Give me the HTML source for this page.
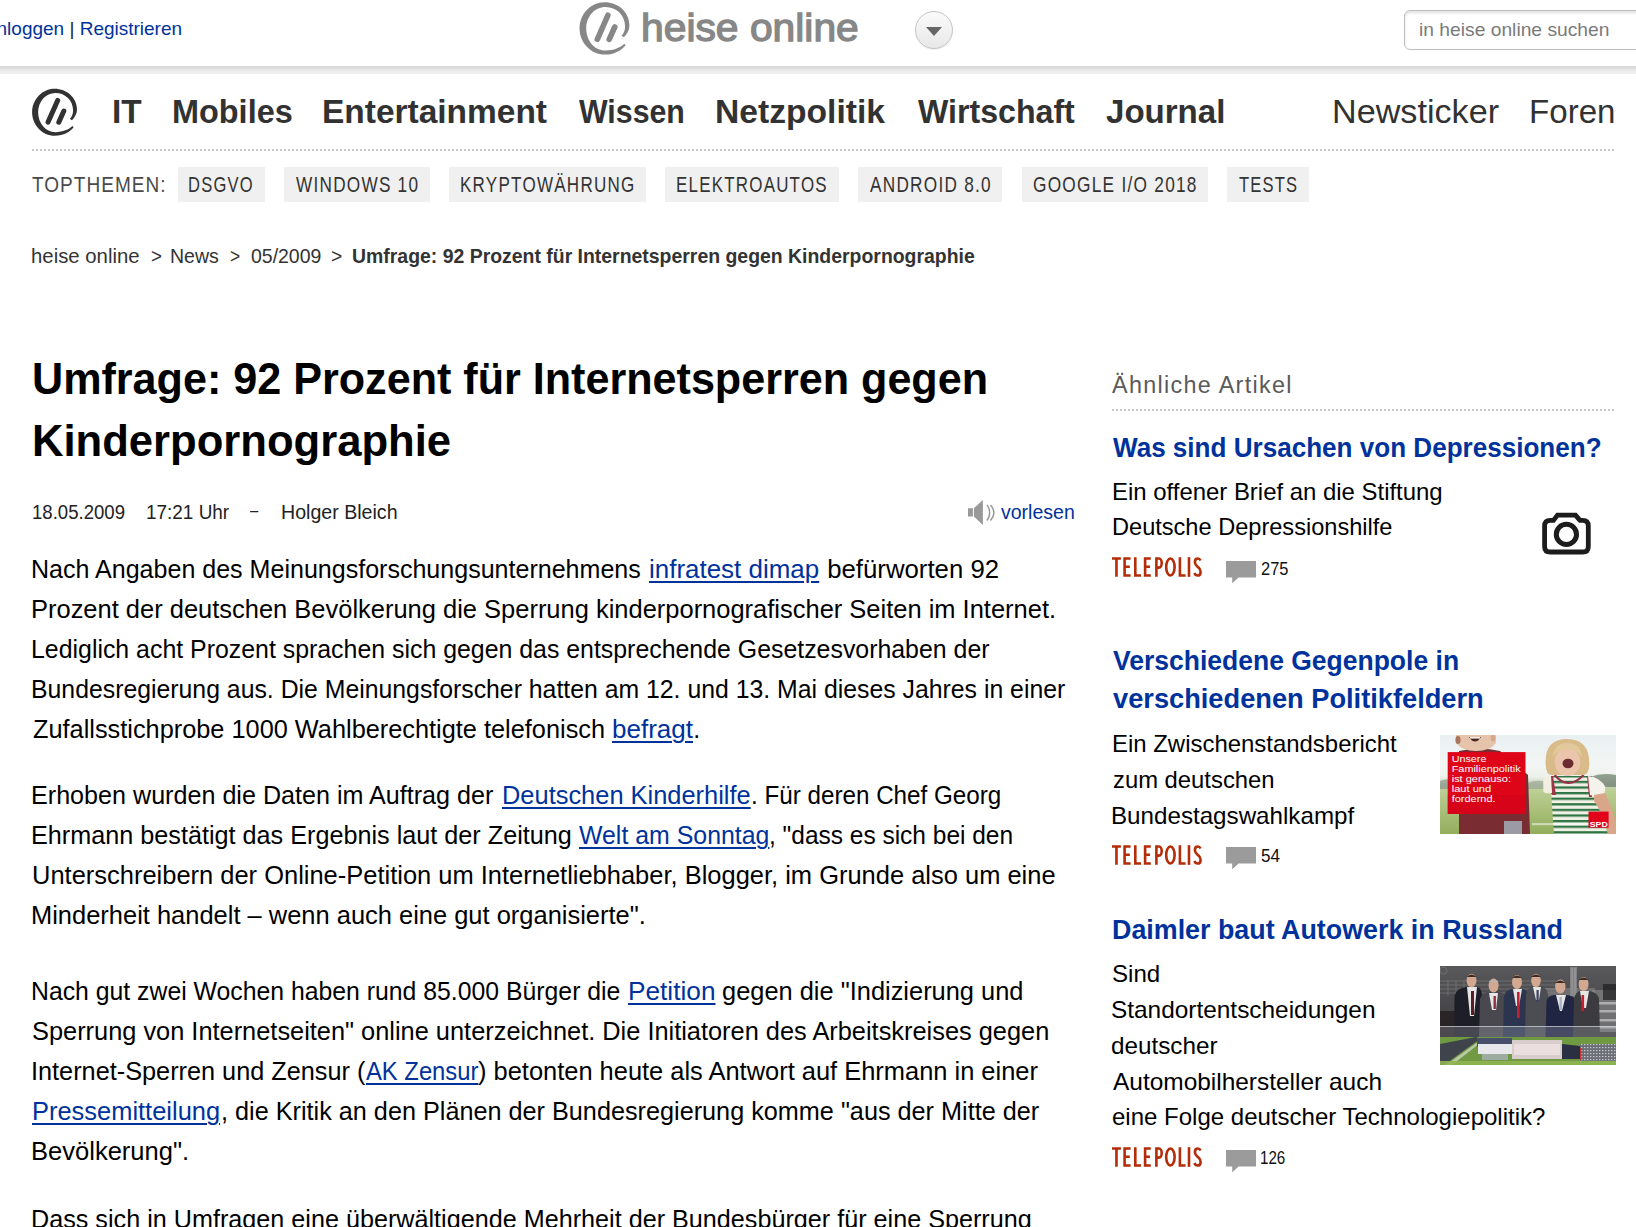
<!DOCTYPE html>
<html lang="de"><head><meta charset="utf-8"><title>Umfrage: 92 Prozent für Internetsperren gegen Kinderpornographie | heise online</title>
<style>
html,body{margin:0;padding:0;background:#fff;width:1636px;height:1227px;overflow:hidden;position:relative}
body{font-family:"Liberation Sans",sans-serif}
.t{position:absolute;white-space:pre;line-height:0;transform-origin:0 0}
.t a{color:#00329c;text-decoration:underline;text-decoration-thickness:2px;text-underline-offset:3px}
.abs{position:absolute}
.hbar{position:absolute;left:0;top:66px;width:1636px;height:8px;background:linear-gradient(#d8d8d8 0%,#dcdcdc 25%,#eeeeee 65%,#f0f0f0 100%)}
.search{position:absolute;left:1404px;top:10px;width:260px;height:38px;border:1.5px solid #bdbdbd;border-radius:6px;box-shadow:inset 0 2px 3px rgba(0,0,0,.12);background:#fff}
.dd{position:absolute;left:915px;top:11px;width:36px;height:36px;border-radius:50%;border:1.5px solid #c4c4c4;background:linear-gradient(#fbfbfb,#e8e8e8);box-shadow:0 1px 1px rgba(0,0,0,.08)}
.dd:after{content:"";position:absolute;left:9.8px;top:15.3px;border-left:8.5px solid transparent;border-right:8.5px solid transparent;border-top:9px solid #666}
.dots{position:absolute;height:2px;background-image:linear-gradient(90deg,#c8c8c8 50%,transparent 50%);background-size:4px 2px}
.tag{position:absolute;top:167px;height:35px;background:#f0f0f0}
</style></head><body>
<div class="hbar"></div>
<div class="search"></div>
<div class="dd"></div>
<svg class="abs" style="left:575.3px;top:-3.4px" width="62.2" height="62.2" viewBox="0 0 1227 1227"><path fill="#878787" d="M965 795C1030 720 1074 650 1074 560C1074 300 850 105 582 105C310 105 90 340 90 620C90 900 310 1135 590 1135C780 1135 920 1050 1000 950L972 922C900 1000 760 1055 600 1055C380 1055 222 860 222 620C222 380 390 195 600 195C820 195 988 360 988 580C988 660 960 720 918 765Z"/><g stroke="#878787" stroke-width="110" stroke-linecap="round"><line x1="650" y1="360" x2="440" y2="835"/><line x1="785" y1="592" x2="675" y2="838"/></g></svg>
<svg class="abs" style="left:28px;top:84px" width="56" height="56" viewBox="0 0 1227 1227"><path fill="#323232" d="M965 795C1030 720 1074 650 1074 560C1074 300 850 105 582 105C310 105 90 340 90 620C90 900 310 1135 590 1135C780 1135 920 1050 1000 950L972 922C900 1000 760 1055 600 1055C380 1055 222 860 222 620C222 380 390 195 600 195C820 195 988 360 988 580C988 660 960 720 918 765Z"/><g stroke="#323232" stroke-width="110" stroke-linecap="round"><line x1="650" y1="360" x2="440" y2="835"/><line x1="785" y1="592" x2="675" y2="838"/></g></svg>
<div class="dots" style="left:32px;top:149px;width:1584px"></div>
<div class="tag" style="left:178px;width:87px"></div>
<div class="tag" style="left:284px;width:146px"></div>
<div class="tag" style="left:449px;width:197px"></div>
<div class="tag" style="left:665px;width:174px"></div>
<div class="tag" style="left:858px;width:144px"></div>
<div class="tag" style="left:1022px;width:186px"></div>
<div class="tag" style="left:1227px;width:82px"></div>
<svg class="abs" style="left:968px;top:500px" width="30" height="26" viewBox="0 0 30 26"><path fill="#999" d="M0 8.3H4.9V16.6H0ZM5.9 8.3L14.9 0V25L5.9 16.6Z"/><path fill="none" stroke="#999" stroke-width="1.5" d="M19.1 4.9Q24.3 12.7 19.1 20.5M22.5 4.9Q29.3 12.7 22.5 20.5"/></svg>
<div class="dots" style="left:1112px;top:409px;width:504px"></div>
<svg class="abs" style="left:1540px;top:510px" width="53" height="47" viewBox="0 0 53 47"><path fill="none" stroke="#1c1c1c" stroke-width="4.8" stroke-linejoin="miter" d="M13.5 10.4L17.5 5.1H35.5L40 10.4H42.7Q48.3 10.4 48.3 16V36.4Q48.3 42 42.7 42H10.2Q4.6 42 4.6 36.4V16Q4.6 10.4 10.2 10.4Z"/><circle cx="26.4" cy="24.4" r="10.1" fill="none" stroke="#1c1c1c" stroke-width="5"/></svg>
<svg class="abs" style="left:1440px;top:735px" width="176" height="99" viewBox="0 0 176 99">
<defs><linearGradient id="g2" x1="0" y1="0" x2="0" y2="1">
<stop offset="0" stop-color="#e9f0f2"/><stop offset=".3" stop-color="#f2f5f3"/><stop offset=".42" stop-color="#eef2ec"/><stop offset=".5" stop-color="#c4ceb8"/><stop offset=".56" stop-color="#bccf94"/><stop offset="1" stop-color="#93ad5c"/></linearGradient>
<pattern id="stripes" width="10" height="5.6" patternUnits="userSpaceOnUse" y="1"><rect width="10" height="5.6" fill="#f1f0e4"/><rect width="10" height="2.3" fill="#2f7444"/></pattern>
</defs>
<rect width="176" height="99" fill="url(#g2)"/>
<path d="M0 46 Q10 42 22 46 L22 54 H0Z" fill="#7f8e80" opacity=".6"/>
<path d="M150 42 Q162 37 176 40 V52 H150Z" fill="#6f806f" opacity=".75"/>
<path d="M88 48 Q96 44 106 47 V54 H88Z" fill="#8a9888" opacity=".5"/>
<path d="M19 16 Q40 11 60 16 L88 40 L90 99 H19 Z" fill="#7a2c33"/>
<rect x="64" y="86" width="18" height="13" fill="#9c9aa4"/>
<path d="M16 0 H56 V8 Q50 16 36 16 Q22 16 16 8Z" fill="#e6c3ab"/>
<ellipse cx="18" cy="5" rx="2.6" ry="4" fill="#a8745c"/>
<ellipse cx="53" cy="3" rx="2.4" ry="3.6" fill="#d8a88c"/>
<path d="M29 2 Q35 11 41 2 Z" fill="#4a2424"/>
<rect x="30" y="2" width="10" height="1.6" fill="#f4eee8"/>
<rect x="7.7" y="17.1" width="77.8" height="61.9" fill="#df0519"/>
<rect x="7.7" y="60" width="77.8" height="19" fill="#c8041a" opacity=".35"/>
<g fill="#fff" font-family="Liberation Sans" font-size="8.8">
<text x="11.7" y="27.4" textLength="34.7" lengthAdjust="spacingAndGlyphs">Unsere</text><text x="11.7" y="37" textLength="68.9" lengthAdjust="spacingAndGlyphs">Familienpolitik</text><text x="11.7" y="46.8" textLength="59.3" lengthAdjust="spacingAndGlyphs">ist genauso:</text><text x="11.7" y="56.5" textLength="39.5" lengthAdjust="spacingAndGlyphs">laut und</text><text x="11.7" y="66.5" textLength="43.9" lengthAdjust="spacingAndGlyphs">fordernd.</text></g>
<path d="M110 41 L152 41 Q158 70 168 99 H114 Q112 70 110 41Z" fill="url(#stripes)"/>
<path d="M114.6 40 Q128 56 143.6 40" fill="none" stroke="#9a3048" stroke-width="2"/>
<path d="M110 41 L113 41 L116 60 L112 60Z" fill="#a03448"/><path d="M147 41 L151 41 L152 62 L149 62Z" fill="#a03448"/>
<path d="M103.3 44 Q106 41 111 41 L112 58 Q106 59 103.3 57Z" fill="#f2efe2"/>
<path d="M148 41 Q160 42 165.4 52 L164 62 Q156 62 150 60Z" fill="#f4f2ea"/>
<path d="M154 60 L165 58 Q172 72 176 86 V99 H168 Q164 80 154 66Z" fill="#d9a68a"/>
<path d="M105.7 30 Q104 4 127 4 Q150 4 149.3 30 Q149 40 142 40 L112 40 Q106 40 105.7 30Z" fill="#d9bb8a"/>
<ellipse cx="127.5" cy="27" rx="12.8" ry="14" fill="#ebc4ac"/>
<path d="M113 22 Q114 8 127 8 Q141 8 142 22 Q136 14 127 14 Q118 14 113 22Z" fill="#e2c99c"/>
<ellipse cx="128" cy="28.5" rx="5.5" ry="4.8" fill="#6a2c30"/>
<rect x="148.5" y="76.6" width="20.1" height="16.1" fill="#e2001a"/>
<text x="149.7" y="92.3" fill="#fff" font-family="Liberation Sans" font-weight="700" font-size="7.8" textLength="18.1" lengthAdjust="spacingAndGlyphs">SPD</text>
<rect x="92" y="88" width="55" height="2.2" fill="#fff" opacity=".5"/>
</svg>
<svg class="abs" style="left:1440px;top:966px" width="176" height="99" viewBox="0 0 176 99">
<defs><linearGradient id="g3" x1="0" y1="0" x2="0" y2="1"><stop offset="0" stop-color="#59585b"/><stop offset=".5" stop-color="#444346"/><stop offset="1" stop-color="#2c2b2e"/></linearGradient>
<pattern id="park" width="3" height="3" patternUnits="userSpaceOnUse"><rect width="3" height="3" fill="#6a6e74"/><rect width="1.4" height="1.2" fill="#c8ccd2"/></pattern></defs>
<rect width="176" height="99" fill="url(#g3)"/>
<g stroke="#7e7e80" stroke-width=".9" fill="none" opacity=".7"><path d="M0 15H120M0 19H120M0 23H120M0 27H120M8 14V30M16 14V30M24 14V30"/><circle cx="3.5" cy="4.5" r="3.5"/></g>
<rect x="0" y="45" width="16" height="30" fill="#231d1e" opacity=".8"/>
<rect x="130" y="1" width="7" height="30" fill="#8c8c8e" opacity=".8"/>
<rect x="131.5" y="2" width="1.2" height="28" fill="#b0b0b2" opacity=".6"/><rect x="134.5" y="2" width="1.2" height="28" fill="#b0b0b2" opacity=".6"/>
<rect x="105" y="22" width="50" height="10" fill="#8a8a8c" opacity=".55"/>
<rect x="152" y="24" width="24" height="42" fill="#8e8e90" opacity=".6"/>
<g fill="#c8c8ca" opacity=".7"><rect x="153" y="36" width="23" height="2.5"/><rect x="153" y="44" width="23" height="2.5"/><rect x="153" y="53" width="23" height="2.5"/><rect x="153" y="60" width="23" height="2.5"/></g>
<rect x="163" y="18" width="13" height="16" fill="#1e1e20" opacity=".7"/>
<path d="M14.5 30 Q16 22 27 21 H37 Q42 22 42 30 L44 71 H14 Z" fill="#1d1e27"/>
<path d="M40 33 Q42 27 48 26 H59 Q64 27 65 33 L66 71 H39 Z" fill="#48484e"/>
<path d="M64 30 Q66 24 72 23 H82 Q88 24 89 30 L90 71 H63 Z" fill="#2c3550"/>
<path d="M86 28 Q88 22 92 21 H101 Q107 22 108 28 L109 71 H85 Z" fill="#4b4d53"/>
<path d="M106.5 35 Q108 29 115 29 H126 Q134 29 136 35 L137 71 H105.5 Z" fill="#1f2542"/>
<path d="M134 32 Q136 26 140 25 H148 Q157 26 159 32 L160 71 H133 Z" fill="#3b3b40"/>
<g fill="#e8e6e4"><path d="M27 21 L37 21 L34 50 L30 50 Z"/><path d="M49 27 L58 27 L56 44 L52 44Z"/><path d="M73 23 L82 23 L79 40 L76 40Z"/><path d="M93 21 L101 21 L99 34 L96 34Z"/><path d="M116 29 L126 29 L122 45 L120 45Z"/><path d="M140 25 L149 25 L146 42 L143 42Z"/></g>
<g><rect x="31" y="25" width="3" height="24" fill="#5a1c26"/><rect x="53.5" y="30" width="2.4" height="13" fill="#8c3040"/><rect x="77" y="26" width="2.6" height="26" fill="#c42032"/><rect x="96.5" y="24" width="2.2" height="12" fill="#3e3e66"/><rect x="119.5" y="31" width="2.4" height="13" fill="#a8b4cc"/><rect x="141.5" y="29" width="2.6" height="16" fill="#c62030"/></g>
<g fill="#d2a890"><ellipse cx="31.5" cy="14.5" rx="5" ry="6.8"/><ellipse cx="53.6" cy="19.5" rx="5" ry="7"/><ellipse cx="77" cy="16" rx="5" ry="7"/><ellipse cx="96" cy="14.5" rx="4.8" ry="6.8"/><ellipse cx="120.3" cy="20.5" rx="5.2" ry="7"/><ellipse cx="143.6" cy="18" rx="5" ry="7"/></g>
<g fill="#3c2c26"><path d="M26.5 11 Q31.5 6 36.5 11 Z"/><path d="M48.6 16 Q53.6 11 58.6 16Z" fill="#b8b4b0"/><path d="M72 12 Q77 7 82 12Z"/><path d="M91 11 Q96 6 101 11Z"/><path d="M115 17 Q120 12 125.5 17Z"/><path d="M138.6 14 Q143.6 9 148.6 14Z"/></g>
<rect x="0" y="60" width="176" height="11" fill="#a4aab2" opacity=".3"/>
<path d="M0 60.5H176" stroke="#cfd3d8" stroke-width=".9" opacity=".8"/>
<path d="M0 71 H176 V99 H0 Z" fill="#6f9a42"/>
<path d="M0 78 L36 71 L40 73 L4 99 H0Z" fill="#3e434c"/>
<path d="M6 99 L42 73 L44 74 L12 99Z" fill="#d8dcd0" opacity=".7"/>
<rect x="37" y="72" width="35" height="9" fill="#46506a"/>
<rect x="38" y="78" width="34" height="10" fill="#e6e8ec"/>
<rect x="42" y="88" width="26" height="6" fill="#a8b0b8" opacity=".8"/>
<rect x="72" y="74" width="50" height="19" fill="#d8cccc"/>
<rect x="74" y="78" width="46" height="11" fill="#efe2e2" opacity=".8"/>
<path d="M122 78 L140 80 V93 H122Z" fill="#2a3042"/>
<rect x="140" y="78" width="36" height="17" fill="url(#park)"/>
<rect x="140" y="82" width="1.4" height="12" fill="#c83030"/>
<rect x="0" y="95" width="176" height="4" fill="#8fb452" opacity=".9"/>
</svg>
<svg class="abs" style="left:1226px;top:560.5px" width="30" height="23" viewBox="0 0 30 23"><path fill="#9b9b9b" d="M0 0H30V16.4H12.6L6.2 22.3V16.4H0Z"/></svg>
<svg class="abs" style="left:1226px;top:847px" width="30" height="23" viewBox="0 0 30 23"><path fill="#9b9b9b" d="M0 0H30V16.4H12.6L6.2 22.3V16.4H0Z"/></svg>
<svg class="abs" style="left:1226px;top:1149.7px" width="30" height="23" viewBox="0 0 30 23"><path fill="#9b9b9b" d="M0 0H30V16.4H12.6L6.2 22.3V16.4H0Z"/></svg>

<svg class="abs" style="left:1112px;top:557.2px" width="91" height="20" viewBox="0 0 91 19.7"><g fill="none" stroke="#b42c08" stroke-width="2.6"><path d="M0 1.3H8.9M4.45 0V19.7"/><path d="M12.6 19.7V1.3H18.6M11.3 9.6H17.8M11.3 18.4H18.6"/><path d="M23.3 0V18.4H29"/><path d="M33.1 19.7V1.3H38.8M31.8 9.6H38M31.8 18.4H38.8"/><path d="M44.4 19.7V1.3H47A2.7 4.6 0 0 1 47 10.5H44.4"/><ellipse cx="58.4" cy="9.85" rx="4.2" ry="8.55"/><path d="M67.9 0V18.4H73.6"/><path d="M77 0V19.7"/><path d="M88.6 3.4C87.9 1.9 86.9 1.3 85.7 1.3C83.9 1.3 82.9 3 82.9 5.1C82.9 7.9 85.3 9.2 86.9 10.8C88.2 12.1 88.6 13.4 88.6 15C88.6 17.3 87.4 18.4 85.6 18.4C84.1 18.4 83 17.4 82.4 15.9"/></g></svg>
<svg class="abs" style="left:1112px;top:844.5px" width="91" height="20" viewBox="0 0 91 19.7"><g fill="none" stroke="#b42c08" stroke-width="2.6"><path d="M0 1.3H8.9M4.45 0V19.7"/><path d="M12.6 19.7V1.3H18.6M11.3 9.6H17.8M11.3 18.4H18.6"/><path d="M23.3 0V18.4H29"/><path d="M33.1 19.7V1.3H38.8M31.8 9.6H38M31.8 18.4H38.8"/><path d="M44.4 19.7V1.3H47A2.7 4.6 0 0 1 47 10.5H44.4"/><ellipse cx="58.4" cy="9.85" rx="4.2" ry="8.55"/><path d="M67.9 0V18.4H73.6"/><path d="M77 0V19.7"/><path d="M88.6 3.4C87.9 1.9 86.9 1.3 85.7 1.3C83.9 1.3 82.9 3 82.9 5.1C82.9 7.9 85.3 9.2 86.9 10.8C88.2 12.1 88.6 13.4 88.6 15C88.6 17.3 87.4 18.4 85.6 18.4C84.1 18.4 83 17.4 82.4 15.9"/></g></svg>
<svg class="abs" style="left:1112px;top:1147.1px" width="91" height="20" viewBox="0 0 91 19.7"><g fill="none" stroke="#b42c08" stroke-width="2.6"><path d="M0 1.3H8.9M4.45 0V19.7"/><path d="M12.6 19.7V1.3H18.6M11.3 9.6H17.8M11.3 18.4H18.6"/><path d="M23.3 0V18.4H29"/><path d="M33.1 19.7V1.3H38.8M31.8 9.6H38M31.8 18.4H38.8"/><path d="M44.4 19.7V1.3H47A2.7 4.6 0 0 1 47 10.5H44.4"/><ellipse cx="58.4" cy="9.85" rx="4.2" ry="8.55"/><path d="M67.9 0V18.4H73.6"/><path d="M77 0V19.7"/><path d="M88.6 3.4C87.9 1.9 86.9 1.3 85.7 1.3C83.9 1.3 82.9 3 82.9 5.1C82.9 7.9 85.3 9.2 86.9 10.8C88.2 12.1 88.6 13.4 88.6 15C88.6 17.3 87.4 18.4 85.6 18.4C84.1 18.4 83 17.4 82.4 15.9"/></g></svg>
<div class="t" id="t0" style="left:-20.37px;top:28.62px;font-size:19px;font-weight:400;color:#00329c;transform:scaleX(1.0000);">Einloggen <span style="color:#222">|</span> Registrieren</div>
<div class="t" id="t1" style="left:1419.39px;top:30.22px;font-size:19px;font-weight:400;color:#7a7a7a;transform:scaleX(1.0131);">in heise online suchen</div>
<div class="t" id="t2" style="left:640.77px;top:27.69px;font-size:38.4px;font-weight:400;color:#878787;transform:scaleX(1.0628);-webkit-text-stroke:1.3px #878787">heise online</div>
<div class="t" id="t3" style="left:111.98px;top:112.07px;font-size:33px;font-weight:700;color:#323232;transform:scaleX(1.0122);">IT</div>
<div class="t" id="t4" style="left:172.04px;top:112.07px;font-size:33px;font-weight:700;color:#323232;transform:scaleX(0.9825);">Mobiles</div>
<div class="t" id="t5" style="left:322.37px;top:112.07px;font-size:33px;font-weight:700;color:#323232;transform:scaleX(1.0142);">Entertainment</div>
<div class="t" id="t6" style="left:579.20px;top:112.07px;font-size:33px;font-weight:700;color:#323232;transform:scaleX(0.9186);">Wissen</div>
<div class="t" id="t7" style="left:715.36px;top:112.07px;font-size:33px;font-weight:700;color:#323232;transform:scaleX(1.0188);">Netzpolitik</div>
<div class="t" id="t8" style="left:917.50px;top:112.07px;font-size:33px;font-weight:700;color:#323232;transform:scaleX(0.9735);">Wirtschaft</div>
<div class="t" id="t9" style="left:1105.80px;top:112.07px;font-size:33px;font-weight:700;color:#323232;transform:scaleX(1.0015);">Journal</div>
<div class="t" id="t10" style="left:1331.73px;top:112.07px;font-size:33px;font-weight:400;color:#323232;transform:scaleX(1.0353);">Newsticker</div>
<div class="t" id="t11" style="left:1528.59px;top:112.07px;font-size:33px;font-weight:400;color:#323232;transform:scaleX(1.0030);">Foren</div>
<div class="t" id="t12" style="left:32.10px;top:184.68px;font-size:22px;font-weight:400;color:#4a4a4a;transform:scaleX(0.8638);letter-spacing:1.2px">TOPTHEMEN:</div>
<div class="t" id="t13" style="left:188.15px;top:184.68px;font-size:22px;font-weight:400;color:#333;transform:scaleX(0.7516);letter-spacing:1.6px">DSGVO</div>
<div class="t" id="t14" style="left:295.70px;top:184.68px;font-size:22px;font-weight:400;color:#333;transform:scaleX(0.7810);letter-spacing:1.6px">WINDOWS 10</div>
<div class="t" id="t15" style="left:460.23px;top:184.68px;font-size:22px;font-weight:400;color:#333;transform:scaleX(0.7749);letter-spacing:1.6px">KRYPTOWÄHRUNG</div>
<div class="t" id="t16" style="left:676.43px;top:184.68px;font-size:22px;font-weight:400;color:#333;transform:scaleX(0.7695);letter-spacing:1.6px">ELEKTROAUTOS</div>
<div class="t" id="t17" style="left:869.80px;top:184.68px;font-size:22px;font-weight:400;color:#333;transform:scaleX(0.7823);letter-spacing:1.6px">ANDROID 8.0</div>
<div class="t" id="t18" style="left:1032.72px;top:184.68px;font-size:22px;font-weight:400;color:#333;transform:scaleX(0.7849);letter-spacing:1.6px">GOOGLE I/O 2018</div>
<div class="t" id="t19" style="left:1239.00px;top:184.68px;font-size:22px;font-weight:400;color:#333;transform:scaleX(0.7517);letter-spacing:1.6px">TESTS</div>
<div class="t" id="t20" style="left:31.23px;top:255.82px;font-size:21px;font-weight:400;color:#333;transform:scaleX(0.9691);">heise online</div>
<div class="t" id="t21" style="left:150.51px;top:255.82px;font-size:21px;font-weight:400;color:#333;transform:scaleX(0.8909);">&gt;</div>
<div class="t" id="t22" style="left:170.37px;top:255.82px;font-size:21px;font-weight:400;color:#333;transform:scaleX(0.9292);">News</div>
<div class="t" id="t23" style="left:230.07px;top:255.82px;font-size:21px;font-weight:400;color:#333;transform:scaleX(0.8273);">&gt;</div>
<div class="t" id="t24" style="left:250.70px;top:255.82px;font-size:21px;font-weight:400;color:#333;transform:scaleX(0.9265);">05/2009</div>
<div class="t" id="t25" style="left:330.78px;top:255.82px;font-size:21px;font-weight:400;color:#333;transform:scaleX(0.9182);">&gt;</div>
<div class="t" id="t26" style="left:351.58px;top:255.82px;font-size:21px;font-weight:700;color:#333;transform:scaleX(0.9250);">Umfrage: 92 Prozent für Internetsperren gegen Kinderpornographie</div>
<div class="t" id="t27" style="left:31.84px;top:379.15px;font-size:44px;font-weight:700;color:#000;transform:scaleX(0.9800);">Umfrage: 92 Prozent für Internetsperren gegen</div>
<div class="t" id="t28" style="left:31.82px;top:440.85px;font-size:44px;font-weight:700;color:#000;transform:scaleX(0.9909);">Kinderpornographie</div>
<div class="t" id="t29" style="left:31.79px;top:511.80px;font-size:20.5px;font-weight:400;color:#222;transform:scaleX(0.9061);">18.05.2009</div>
<div class="t" id="t30" style="left:146.18px;top:511.80px;font-size:20.5px;font-weight:400;color:#222;transform:scaleX(0.9238);">17:21 Uhr</div>
<div class="t" id="t31" style="left:249.80px;top:510.10px;font-size:20.5px;font-weight:400;color:#222;transform:scaleX(0.7167);">–</div>
<div class="t" id="t32" style="left:281.14px;top:511.80px;font-size:20.5px;font-weight:400;color:#222;transform:scaleX(0.9559);">Holger Bleich</div>
<div class="t" id="t33" style="left:1001.10px;top:511.90px;font-size:20.5px;font-weight:400;color:#00329c;transform:scaleX(0.9522);">vorlesen</div>
<div class="t" id="t34" style="left:31.20px;top:569.34px;font-size:25px;font-weight:400;color:#000;transform:scaleX(1.0017);">Nach Angaben des Meinungsforschungsunternehmens </div>
<div class="t" id="t35" style="left:649.30px;top:569.34px;font-size:25px;font-weight:400;color:#000;transform:scaleX(1.0380);"><a>infratest dimap</a></div>
<div class="t" id="t36" style="left:819.50px;top:569.34px;font-size:25px;font-weight:400;color:#000;transform:scaleX(1.0306);"> befürworten 92</div>
<div class="t" id="t37" style="left:31.16px;top:609.34px;font-size:25px;font-weight:400;color:#000;transform:scaleX(1.0188);">Prozent der deutschen Bevölkerung die Sperrung kinderpornografischer Seiten im Internet.</div>
<div class="t" id="t38" style="left:31.21px;top:649.34px;font-size:25px;font-weight:400;color:#000;transform:scaleX(0.9952);">Lediglich acht Prozent sprachen sich gegen das entsprechende Gesetzesvorhaben der</div>
<div class="t" id="t39" style="left:31.22px;top:689.34px;font-size:25px;font-weight:400;color:#000;transform:scaleX(0.9923);">Bundesregierung aus. Die Meinungsforscher hatten am 12. und 13. Mai dieses Jahres in einer</div>
<div class="t" id="t40" style="left:33.20px;top:729.34px;font-size:25px;font-weight:400;color:#000;transform:scaleX(1.0131);">Zufallsstichprobe 1000 Wahlberechtigte telefonisch </div>
<div class="t" id="t41" style="left:612.30px;top:729.34px;font-size:25px;font-weight:400;color:#000;transform:scaleX(1.0407);"><a>befragt</a></div>
<div class="t" id="t42" style="left:693.30px;top:729.34px;font-size:25px;font-weight:400;color:#000;transform:scaleX(1.0000);">.</div>
<div class="t" id="t43" style="left:31.19px;top:795.34px;font-size:25px;font-weight:400;color:#000;transform:scaleX(1.0051);">Erhoben wurden die Daten im Auftrag der </div>
<div class="t" id="t44" style="left:501.90px;top:795.34px;font-size:25px;font-weight:400;color:#000;transform:scaleX(1.0168);"><a>Deutschen Kinderhilfe</a></div>
<div class="t" id="t45" style="left:750.60px;top:795.34px;font-size:25px;font-weight:400;color:#000;transform:scaleX(0.9683);">. Für deren Chef Georg</div>
<div class="t" id="t46" style="left:31.18px;top:835.34px;font-size:25px;font-weight:400;color:#000;transform:scaleX(1.0082);">Ehrmann bestätigt das Ergebnis laut der Zeitung </div>
<div class="t" id="t47" style="left:579.00px;top:835.34px;font-size:25px;font-weight:400;color:#000;transform:scaleX(0.9953);"><a>Welt am Sonntag</a></div>
<div class="t" id="t48" style="left:769.40px;top:835.34px;font-size:25px;font-weight:400;color:#000;transform:scaleX(0.9791);">, "dass es sich bei den</div>
<div class="t" id="t49" style="left:32.18px;top:875.34px;font-size:25px;font-weight:400;color:#000;transform:scaleX(1.0188);">Unterschreibern der Online-Petition um Internetliebhaber, Blogger, im Grunde also um eine</div>
<div class="t" id="t50" style="left:31.16px;top:915.34px;font-size:25px;font-weight:400;color:#000;transform:scaleX(1.0184);">Minderheit handelt – wenn auch eine gut organisierte".</div>
<div class="t" id="t51" style="left:31.22px;top:991.34px;font-size:25px;font-weight:400;color:#000;transform:scaleX(0.9916);">Nach gut zwei Wochen haben rund 85.000 Bürger die </div>
<div class="t" id="t52" style="left:627.50px;top:991.34px;font-size:25px;font-weight:400;color:#000;transform:scaleX(1.0493);"><a>Petition</a></div>
<div class="t" id="t53" style="left:715.00px;top:991.34px;font-size:25px;font-weight:400;color:#000;transform:scaleX(1.0160);"> gegen die "Indizierung und</div>
<div class="t" id="t54" style="left:32.19px;top:1031.34px;font-size:25px;font-weight:400;color:#000;transform:scaleX(1.0147);">Sperrung von Internetseiten" online unterzeichnet. Die Initiatoren des Arbeitskreises gegen</div>
<div class="t" id="t55" style="left:31.18px;top:1071.34px;font-size:25px;font-weight:400;color:#000;transform:scaleX(1.0112);">Internet-Sperren und Zensur (</div>
<div class="t" id="t56" style="left:365.60px;top:1071.34px;font-size:25px;font-weight:400;color:#000;transform:scaleX(0.9517);"><a>AK Zensur</a></div>
<div class="t" id="t57" style="left:478.00px;top:1071.34px;font-size:25px;font-weight:400;color:#000;transform:scaleX(1.0174);">) betonten heute als Antwort auf Ehrmann in einer</div>
<div class="t" id="t58" style="left:32.40px;top:1111.34px;font-size:25px;font-weight:400;color:#000;transform:scaleX(1.0178);"><a>Pressemitteilung</a></div>
<div class="t" id="t59" style="left:220.50px;top:1111.34px;font-size:25px;font-weight:400;color:#000;transform:scaleX(1.0092);">, die Kritik an den Plänen der Bundesregierung komme "aus der Mitte der</div>
<div class="t" id="t60" style="left:31.16px;top:1151.34px;font-size:25px;font-weight:400;color:#000;transform:scaleX(1.0215);">Bevölkerung".</div>
<div class="t" id="t61" style="left:31.19px;top:1218.84px;font-size:25px;font-weight:400;color:#000;transform:scaleX(1.0072);">Dass sich in Umfragen eine überwältigende Mehrheit der Bundesbürger für eine Sperrung</div>
<div class="t" id="t62" style="left:1112.10px;top:384.83px;font-size:23px;font-weight:400;color:#5a5a5a;transform:scaleX(1.0152);letter-spacing:1.3px">Ähnliche Artikel</div>
<div class="t" id="t63" style="left:1112.50px;top:448.24px;font-size:27px;font-weight:700;color:#00329c;transform:scaleX(0.9654);">Was sind Ursachen von Depressionen?</div>
<div class="t" id="t64" style="left:1111.50px;top:491.78px;font-size:24px;font-weight:400;color:#000;transform:scaleX(0.9966);">Ein offener Brief an die Stiftung</div>
<div class="t" id="t65" style="left:1111.52px;top:527.18px;font-size:24px;font-weight:400;color:#000;transform:scaleX(0.9823);">Deutsche Depressionshilfe</div>
<div class="t" id="t66" style="left:1112.50px;top:661.04px;font-size:27px;font-weight:700;color:#00329c;transform:scaleX(0.9814);">Verschiedene Gegenpole in</div>
<div class="t" id="t67" style="left:1112.50px;top:699.34px;font-size:27px;font-weight:700;color:#00329c;transform:scaleX(1.0084);">verschiedenen Politikfeldern</div>
<div class="t" id="t68" style="left:1111.50px;top:743.68px;font-size:24px;font-weight:400;color:#000;transform:scaleX(0.9972);">Ein Zwischenstandsbericht</div>
<div class="t" id="t69" style="left:1112.50px;top:779.68px;font-size:24px;font-weight:400;color:#000;transform:scaleX(0.9925);">zum deutschen</div>
<div class="t" id="t70" style="left:1111.49px;top:815.68px;font-size:24px;font-weight:400;color:#000;transform:scaleX(1.0070);">Bundestagswahlkampf</div>
<div class="t" id="t71" style="left:1111.51px;top:930.04px;font-size:27px;font-weight:700;color:#00329c;transform:scaleX(0.9943);">Daimler baut Autowerk in Russland</div>
<div class="t" id="t72" style="left:1111.50px;top:973.68px;font-size:24px;font-weight:400;color:#000;transform:scaleX(1.0025);">Sind</div>
<div class="t" id="t73" style="left:1111.48px;top:1009.68px;font-size:24px;font-weight:400;color:#000;transform:scaleX(1.0165);">Standortentscheidungen</div>
<div class="t" id="t74" style="left:1111.49px;top:1045.78px;font-size:24px;font-weight:400;color:#000;transform:scaleX(1.0105);">deutscher</div>
<div class="t" id="t75" style="left:1112.50px;top:1081.78px;font-size:24px;font-weight:400;color:#000;transform:scaleX(1.0183);">Automobilhersteller auch</div>
<div class="t" id="t76" style="left:1111.50px;top:1116.88px;font-size:24px;font-weight:400;color:#000;transform:scaleX(1.0005);">eine Folge deutscher Technologiepolitik?</div>
<div class="t" id="t77" style="left:1260.60px;top:568.66px;font-size:18px;font-weight:400;color:#111;transform:scaleX(0.9127);">275</div>
<div class="t" id="t78" style="left:1260.60px;top:855.96px;font-size:18px;font-weight:400;color:#111;transform:scaleX(0.9495);">54</div>
<div class="t" id="t79" style="left:1259.76px;top:1157.56px;font-size:18px;font-weight:400;color:#111;transform:scaleX(0.8408);">126</div>
</body></html>
